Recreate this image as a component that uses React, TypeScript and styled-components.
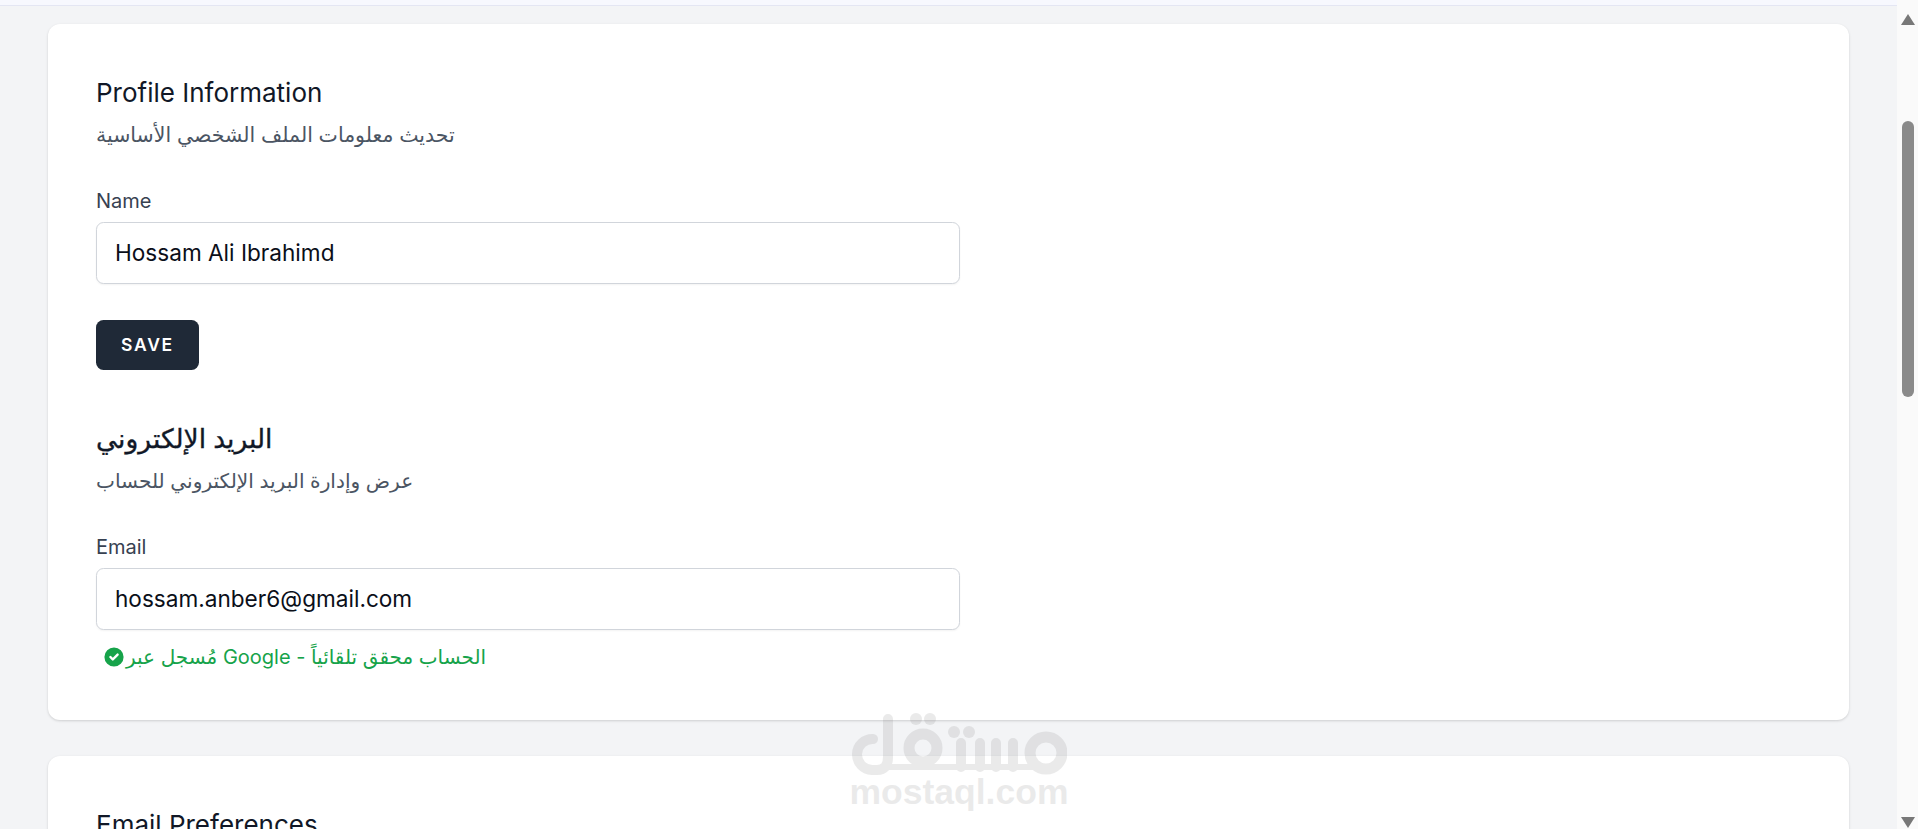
import React from 'react';
import styled, {createGlobalStyle} from 'styled-components';

const GlobalStyle = createGlobalStyle`
    html, body {
        margin: 0;
        height: 100%;
        overflow: hidden;
    }
    body {
        font-family: "Inter", "Noto Sans", "DejaVu Sans", sans-serif;
        background: #f3f4f6;
    }
`

const PageBox = styled.div`
    position: relative;
    display: grid;
    grid-template-columns: 1fr 21px;
    height: 829px;
    overflow: hidden;
`

const MainBox = styled.main`
    display: flex;
    flex-direction: column;
    gap: 36px;
    height: 829px;
    overflow: hidden;
    padding: 0 48px;
`

const TopStrip = styled.div`
    flex: none;
    height: 5px;
    margin: 0 -48px -18px;
    background: #f7f8fe;
    border-bottom: 1px solid #e4e6f3;
`

const Card = styled.section`
    flex: none;
    background: #ffffff;
    border-radius: 12px;
    box-shadow: 0 1px 3px rgba(0, 0, 0, 0.12), 0 1px 2px rgba(0, 0, 0, 0.04);
    padding: 52px 48px 45px;
`

const Title = styled.h2`
    margin: 0;
    font-size: 26px;
    line-height: 33px;
    font-weight: 400;
    color: #111827;
`

const Subtitle = styled.p<{$size?: number}>`
    margin: 12px 0 0;
    font-size: ${props => props.$size ?? 20.5}px;
    line-height: 28px;
    color: #4b5563;
`

const Label = styled.label`
    display: block;
    margin-top: 38px;
    font-size: 20px;
    line-height: 28px;
    font-weight: 400;
    color: #374151;
`

const TextInput = styled.input`
    display: block;
    box-sizing: border-box;
    width: 864px;
    height: 62px;
    margin-top: 7px;
    padding: 0 18px 2px;
    border: 1px solid #d1d5db;
    border-radius: 7.5px;
    background: #ffffff;
    box-shadow: 0 1px 2px rgba(0, 0, 0, 0.05);
    font: inherit;
    font-size: 22.6px;
    color: #0b0f19;
    outline: none;
`

const SaveButton = styled.button`
    display: block;
    box-sizing: border-box;
    width: 103px;
    height: 50px;
    margin-top: 36px;
    padding-bottom: 2px;
    border: 1px solid transparent;
    border-radius: 7.5px;
    background: #1f2937;
    color: #ffffff;
    font: inherit;
    font-size: 17.5px;
    font-weight: 600;
    letter-spacing: 0.1em;
`

const SecondTitle = styled(Title)`
    margin-top: 52px;
    font-size: 26.5px;
    font-weight: 500;
    -webkit-text-stroke: 0.35px #111827;
`

const VerifiedRow = styled.div`
    display: flex;
    align-items: center;
    margin-top: 9px;
    padding-left: 6px;
    font-size: 20px;
    line-height: 36px;
    color: #16a34a;
`

const CheckIcon = styled.svg`
    flex: none;
    width: 24px;
    height: 24px;
    fill: #16a34a;
`

const ScrollTrack = styled.div`
    position: relative;
    display: flex;
    flex-direction: column;
    align-items: center;
    justify-content: space-between;
    padding: 14px 0 1px;
    background: #fafafa;
`

const ScrollArrow = styled.div<{$down?: boolean}>`
    width: 0;
    height: 0;
    border-left: 7px solid transparent;
    border-right: 7px solid transparent;
    border-bottom: ${props => props.$down ? 'none' : '11px solid #787878'};
    border-top: ${props => props.$down ? '11px solid #787878' : 'none'};
`

const ScrollThumb = styled.div`
    position: absolute;
    top: 121px;
    left: 5px;
    width: 12px;
    height: 276px;
    border-radius: 6px;
    background: #8a8a8a;
`

const Watermark = styled.div`
    position: absolute;
    left: 851px;
    top: 713px;
    display: flex;
    flex-direction: column;
    align-items: center;
    width: 216px;
    opacity: 0.15;
    pointer-events: none;
`

const WatermarkLogo = styled.svg`
    display: block;
    width: 216px;
    height: 65px;
    fill: none;
    stroke: #777777;
`

const WatermarkText = styled.div`
    margin-top: -6px;
    font-family: "Liberation Sans", Arial, sans-serif;
    font-size: 35.5px;
    line-height: 40px;
    font-weight: 700;
    color: #777777;
    white-space: nowrap;
`

const MostaqlLogo: React.FC = () => {
    return (
        <WatermarkLogo viewBox="0 0 216 65">
            <path d="M22 26A15.500 15.500 0 0 0 21 57H26Q37 57 37 44V6" strokeWidth="10" strokeLinecap="round"/>
            <path d="M37 54H190" strokeWidth="6"/>
            <circle cx="72" cy="35" r="14" strokeWidth="11"/>
            <circle cx="195" cy="40" r="16" strokeWidth="11"/>
            <path d="M110 54V30M129 54V30M145 54V30M162 54V30" strokeWidth="10" strokeLinecap="round"/>
            <g fill="#777777" stroke="none">
                <circle cx="65" cy="6" r="6"/>
                <circle cx="79" cy="6" r="6"/>
                <circle cx="103" cy="19" r="6"/>
                <circle cx="118" cy="19" r="6"/>
            </g>
        </WatermarkLogo>
    )
}

const App: React.FC = () => {
    return (
        <PageBox>
            <GlobalStyle/>
            <MainBox>
                <TopStrip/>
                <Card>
                    <Title>Profile Information</Title>
                    <Subtitle>تحديث معلومات الملف الشخصي الأساسية</Subtitle>
                    <Label>Name</Label>
                    <TextInput defaultValue="Hossam Ali Ibrahimd"/>
                    <SaveButton>SAVE</SaveButton>
                    <SecondTitle>البريد الإلكتروني</SecondTitle>
                    <Subtitle $size={20.1}>عرض وإدارة البريد الإلكتروني للحساب</Subtitle>
                    <Label>Email</Label>
                    <TextInput defaultValue="hossam.anber6@gmail.com"/>
                    <VerifiedRow>
                        <CheckIcon viewBox="0 0 20 20">
                            <path fillRule="evenodd" clipRule="evenodd" d="M10 18a8 8 0 100-16 8 8 0 000 16zm3.707-9.293a1 1 0 00-1.414-1.414L9 10.586 7.707 9.293a1 1 0 00-1.414 1.414l2 2a1 1 0 001.414 0l4-4z"/>
                        </CheckIcon>
                        <span>مُسجل عبر Google - الحساب محقق تلقائياً</span>
                    </VerifiedRow>
                </Card>
                <Card>
                    <Title>Email Preferences</Title>
                </Card>
            </MainBox>
            <ScrollTrack>
                <ScrollArrow/>
                <ScrollThumb/>
                <ScrollArrow $down/>
            </ScrollTrack>
            <Watermark>
                <MostaqlLogo/>
                <WatermarkText>mostaql.com</WatermarkText>
            </Watermark>
        </PageBox>
    )
}

export default App;
